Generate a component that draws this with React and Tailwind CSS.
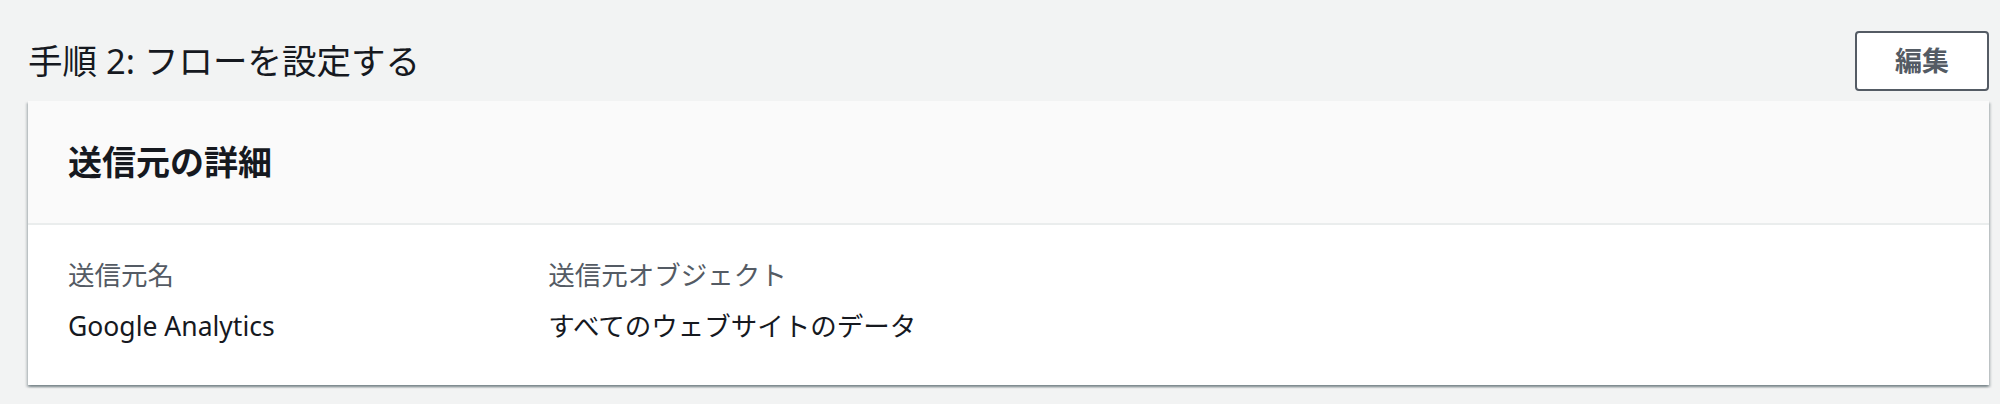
const fields = [
  { label: "送信元名", value: "Google Analytics" },
  { label: "送信元オブジェクト", value: "すべてのウェブサイトのデータ" },
];

const App = () => {
  return (
    <main className="min-h-[404px] bg-[#f2f3f3] pl-[28px] pr-[11px] pt-[31px] font-['Noto_Sans','Noto_Sans_CJK_JP',sans-serif]">
      <div className="flex items-center justify-between">
        <h1 className="text-[34.5px] leading-[40px] text-[#16191f]">手順 2: フローを設定する</h1>
        <button className="h-[60px] rounded-[4px] border-2 border-[#545b64] bg-white px-[38px] text-[27px] font-bold text-[#545b64]">
          編集
        </button>
      </div>

      <section className="mt-[10px] bg-white shadow-[0_2px_2px_0_rgba(0,28,36,0.3),2px_2px_2px_0_rgba(0,28,36,0.15),-2px_2px_2px_0_rgba(0,28,36,0.15)]">
        <div className="flex h-[124px] items-center border-b-2 border-[#eaeded] bg-[#fafafa] px-[40px]">
          <h2 className="text-[34px] font-bold leading-[44px] text-[#16191f]">送信元の詳細</h2>
        </div>
        <div className="grid grid-cols-4 gap-x-[40px] px-[40px] pb-[38px] pt-[29px]">
          {fields.map((f) => (
            <div key={f.label}>
              <div className="text-[26.5px] leading-[42px] text-[#545b64]">{f.label}</div>
              <div className="mt-[9px] text-[26.5px] leading-[42px] text-[#16191f]">{f.value}</div>
            </div>
          ))}
        </div>
      </section>
    </main>
  );
};

export default App;
